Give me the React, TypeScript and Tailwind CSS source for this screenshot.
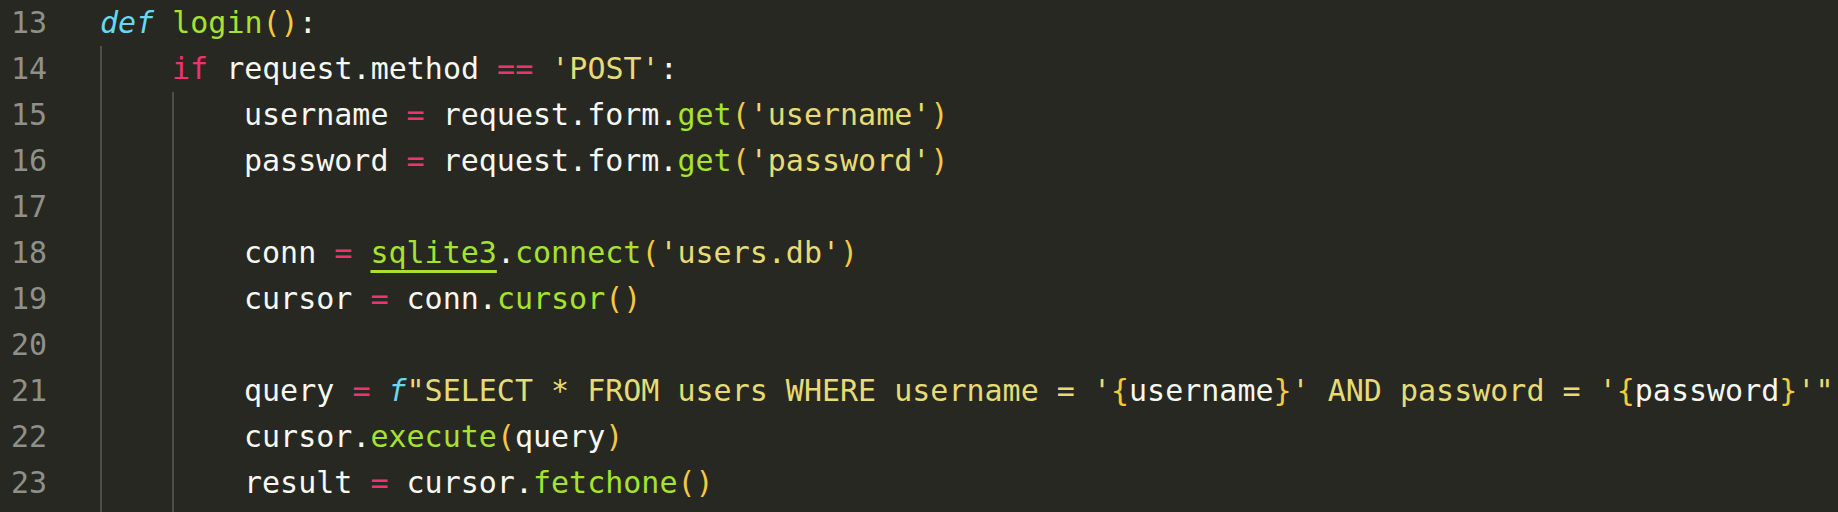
import React from 'react';

type Tok = [string, string];

const W = 'text-[#f8f8f2]';
const P = 'text-[#ee3370]';
const G = 'text-[#a6e22e]';
const S = 'text-[#e6db74]';
const C = 'text-[#66d9ef] italic';
const B = 'text-[#f4c842]';
const U = 'text-[#a6e22e] underline decoration-[#a6e22e] decoration-[3px] underline-offset-[7px]';

const Line = ({ toks, pad = '' }: { toks: Tok[]; pad?: string }) => (
  <div className={`h-[46px] leading-[46px] whitespace-pre ${pad}`}>
    {toks.length === 0 ? ' ' : toks.map(([t, c], i) => (
      <span key={i} className={c}>
        {t}
      </span>
    ))}
  </div>
);

const inner: Tok[][] = [
  [['username ', W], ['=', P], [' request.form.', W], ['get', G], ['(', B], ["'username'", S], [')', B]],
  [['password ', W], ['=', P], [' request.form.', W], ['get', G], ['(', B], ["'password'", S], [')', B]],
  [],
  [['conn ', W], ['=', P], [' ', W], ['sqlite3', U], ['.', W], ['connect', G], ['(', B], ["'users.db'", S], [')', B]],
  [['cursor ', W], ['=', P], [' conn.', W], ['cursor', G], ['()', B]],
  [],
  [
    ['query ', W], ['=', P], [' ', W], ['f', C],
    ['"SELECT * FROM users WHERE username = \'', S], ['{', B], ['username', W], ['}', B],
    ["' AND password = '", S], ['{', B], ['password', W], ['}', B], ['\'"', S],
  ],
  [['cursor.', W], ['execute', G], ['(', B], ['query', W], [')', B]],
  [['result ', W], ['=', P], [' cursor.', W], ['fetchone', G], ['()', B]],
];

export default function App() {
  return (
    <div className="flex h-[512px] w-full overflow-hidden bg-[#272822] font-['DejaVu_Sans_Mono',monospace] text-[30px]">
      {/* gutter */}
      <div className="w-[100px] shrink-0 pl-[11px] text-[#90908a]">
        {Array.from({ length: 11 }, (_, i) => (
          <div key={i} className="h-[46px] leading-[46px]">
            {13 + i}
          </div>
        ))}
      </div>

      {/* code */}
      <div className="flex flex-1 flex-col">
        <Line toks={[['def', C], [' ', W], ['login', G], ['()', B], [':', W]]} />
        <div className="flex flex-1 flex-col border-l-2 border-[#4f4f4a]">
          <Line
            pad="pl-[70px]"
            toks={[['if', P], [' request.method ', W], ['==', P], [' ', W], ["'POST'", S], [':', W]]}
          />
          <div className="ml-[70px] flex-1 border-l-2 border-[#4f4f4a]">
            {inner.map((toks, i) => (
              <Line key={i} pad="pl-[70px]" toks={toks} />
            ))}
          </div>
        </div>
      </div>
    </div>
  );
}
